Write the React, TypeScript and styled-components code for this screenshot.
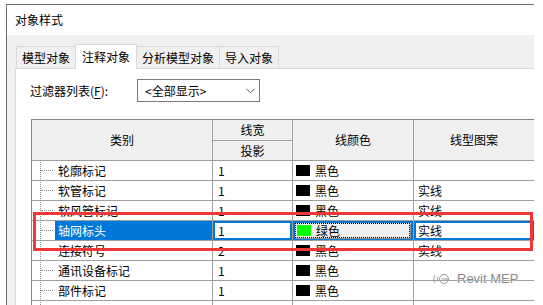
import React from 'react';
import styled, { createGlobalStyle, css } from 'styled-components';

const Global = createGlobalStyle`
  html, body { margin: 0; padding: 0; background: #fff; overflow: hidden; }
  body {
    font-family: "Noto Sans CJK SC", "Noto Sans", sans-serif;
    font-size: 12px;
    color: #000;
  }
  #root { width: 543px; height: 305px; }
`;

const Window = styled.div`
  margin: 4px 0 0 6px;
  width: 528px;
  height: 301px;
  box-sizing: border-box;
  border-top: 1px solid #6d6d6d;
  border-left: 1px solid #6d6d6d;
  overflow: hidden;
  display: flex;
  flex-direction: column;
`;

const TitleBar = styled.div`
  height: 30px;
  flex: none;
  display: flex;
  align-items: center;
  padding-left: 8px;
  background: #fff;
  line-height: 14px;
`;

const Body = styled.div`
  flex: 1;
  background: #f0f0f0;
  padding: 9px 0 0 8px;
  display: flex;
  flex-direction: column;
  min-height: 0;
`;

const TabRow = styled.div`
  height: 24px;
  flex: none;
  display: flex;
  align-items: flex-end;
  padding-left: 1px;
  position: relative;
  z-index: 1;
`;

const Tab = styled.div<{ $active?: boolean }>`
  box-sizing: border-box;
  height: 22px;
  display: flex;
  align-items: center;
  padding: 0 5px;
  border: 1px solid #d9d9d9;
  border-bottom: none;
  background: #f0f0f0;
  line-height: 14px;
  white-space: nowrap;
  & + & { margin-left: -1px; }
  ${p => p.$active && css`
    height: 25px;
    margin-bottom: -1px;
    padding: 0 6px 1px;
    background: #fff;
    position: relative;
    z-index: 2;
  `}
`;

const Panel = styled.div`
  flex: 1;
  background: #fff;
  border-top: 1px solid #d9d9d9;
  border-left: 1px solid #d9d9d9;
  padding: 10px 0 0 14px;
  min-height: 0;
`;

const FilterRow = styled.div`
  display: flex;
  align-items: center;
  height: 23px;
`;

const FilterLabel = styled.div`
  width: 107px;
  line-height: 14px;
  u { text-decoration: underline; text-underline-offset: 2px; }
`;

const Select = styled.div`
  box-sizing: border-box;
  width: 123px;
  height: 23px;
  border: 1px solid #7a7a7a;
  display: flex;
  align-items: center;
  justify-content: space-between;
  padding: 0 4px 0 7px;
  line-height: 14px;
  background: #fff;
`;

const Table = styled.div`
  position: relative;
  margin: 17px 0 0 1px;
  border-top: 1px solid #858585;
  border-left: 1px solid #858585;
  display: grid;
  grid-template-columns: 181px 80px 121px 121px;
  grid-auto-rows: 20px;
  grid-template-rows: 21px 20px;
`;

const HeadCell = styled.div<{ $span?: boolean }>`
  box-sizing: border-box;
  background: #f0f0f0;
  border-right: 1px solid #a0a0a0;
  border-bottom: 1px solid #a0a0a0;
  display: flex;
  align-items: center;
  justify-content: center;
  line-height: 14px;
  ${p => p.$span && css`grid-row: span 2;`}
`;

const Cell = styled.div<{ $selected?: boolean; $pad?: number }>`
  box-sizing: border-box;
  border-right: 1px solid #a0a0a0;
  border-bottom: 1px solid #a0a0a0;
  display: flex;
  align-items: center;
  padding-left: ${p => p.$pad ?? 5}px;
  line-height: 14px;
  white-space: nowrap;
  overflow: hidden;
  ${p => p.$selected && css`box-shadow: inset 0 0 0 2px #0078d7;`}
`;

const CatCell = styled.div<{ $selected?: boolean }>`
  box-sizing: border-box;
  position: relative;
  border-right: 1px solid #a0a0a0;
  border-bottom: 1px solid #a0a0a0;
  display: flex;
  align-items: stretch;
  padding-left: ${p => (p.$selected ? 23 : 26)}px;
  line-height: 14px;
  white-space: nowrap;
  &::before {
    content: '';
    position: absolute;
    left: 8px;
    top: -1px;
    bottom: -1px;
    border-left: 1px dotted #8c8c8c;
  }
  &::after {
    content: '';
    position: absolute;
    left: 9px;
    top: 9px;
    width: 12px;
    border-top: 1px dotted #8c8c8c;
  }
`;

const CatLabel = styled.span<{ $selected?: boolean }>`
  display: flex;
  align-items: center;
  flex: 1;
  ${p => p.$selected && css`
    background: #0078d7;
    color: #fff;
    padding-left: 3px;
  `}
`;

const Swatch = styled.span<{ $color: string }>`
  width: 14px;
  height: 11px;
  background: ${p => p.$color};
  margin-right: 5px;
  flex: none;
`;

const ColorButton = styled.div`
  box-sizing: border-box;
  flex: 1;
  align-self: stretch;
  margin: 2px 2px 2px 0;
  background: #f0f0f0;
  border: 1px dotted #000;
  box-shadow: 1px 1px 0 #8f8f8f;
  display: flex;
  align-items: center;
  padding-left: 1px;
  margin-right: 3px;
`;

const RedFrame = styled.div`
  position: absolute;
  left: 1px;
  top: 92px;
  width: 500px;
  height: 39px;
  box-sizing: border-box;
  border: 3px solid #ee3838;
  pointer-events: none;
`;

const Watermark = styled.div`
  position: absolute;
  left: 400px;
  top: 151px;
  display: flex;
  align-items: center;
  gap: 3px;
  font-family: "Liberation Sans", Arial, sans-serif;
  font-size: 13px;
  color: #8a8a8a;
  text-shadow: 0 0 1px #fff, 0 0 1px #fff;
  pointer-events: none;
`;

type Row = { name: string; width: string; color: 'black' | 'green'; pattern: string; selected?: boolean };

const rows: Row[] = [
  { name: '轮廓标记', width: '1', color: 'black', pattern: '' },
  { name: '软管标记', width: '1', color: 'black', pattern: '实线' },
  { name: '软风管标记', width: '1', color: 'black', pattern: '实线' },
  { name: '轴网标头', width: '1', color: 'green', pattern: '实线', selected: true },
  { name: '连接符号', width: '2', color: 'black', pattern: '实线' },
  { name: '通讯设备标记', width: '1', color: 'black', pattern: '' },
  { name: '部件标记', width: '1', color: 'black', pattern: '' },
];

const Chevron = () => (
  <svg width="9" height="6" viewBox="0 0 9 6">
    <polyline points="0.5,0.8 4.5,4.8 8.5,0.8" fill="none" stroke="#5a5a5a" strokeWidth="1" />
  </svg>
);

const WeChatIcon = () => (
  <svg width="22" height="14" viewBox="0 0 22 14">
    <g fill="none" stroke="#9a9a9a" strokeWidth="1">
      <path d="M3 3 C1.5 5 1.5 9 3 11" />
      <path d="M6 4.5 C5 6 5 8 6 9.5" />
      <circle cx="12" cy="7" r="4.5" />
      <path d="M9.5 7 H17" />
    </g>
  </svg>
);

export default function App() {
  return (
    <>
      <Global />
      <Window>
        <TitleBar>对象样式</TitleBar>
        <Body>
          <TabRow>
            <Tab>模型对象</Tab>
            <Tab $active>注释对象</Tab>
            <Tab>分析模型对象</Tab>
            <Tab>导入对象</Tab>
          </TabRow>
          <Panel>
            <FilterRow>
              <FilterLabel>过滤器列表(<u>F</u>):</FilterLabel>
              <Select>
                <span>&lt;全部显示&gt;</span>
                <Chevron />
              </Select>
            </FilterRow>
            <Table>
              <HeadCell $span>类别</HeadCell>
              <HeadCell>线宽</HeadCell>
              <HeadCell $span>线颜色</HeadCell>
              <HeadCell $span>线型图案</HeadCell>
              <HeadCell>投影</HeadCell>
              {rows.map(r => (
                <React.Fragment key={r.name}>
                  <CatCell $selected={r.selected}>
                    <CatLabel $selected={r.selected}>{r.name}</CatLabel>
                  </CatCell>
                  <Cell $selected={r.selected} $pad={5}>{r.width}</Cell>
                  {r.selected ? (
                    <Cell $selected $pad={2}>
                      <ColorButton>
                        <Swatch $color="#00ff00" />
                        绿色
                      </ColorButton>
                    </Cell>
                  ) : (
                    <Cell $pad={3}>
                      <Swatch $color="#000" />
                      黑色
                    </Cell>
                  )}
                  <Cell $selected={r.selected} $pad={4}>{r.pattern}</Cell>
                </React.Fragment>
              ))}
              <CatCell><CatLabel /></CatCell>
              <Cell />
              <Cell />
              <Cell />
              <RedFrame />
              <Watermark>
                <WeChatIcon />
                <span>Revit MEP</span>
              </Watermark>
            </Table>
          </Panel>
        </Body>
      </Window>
    </>
  );
}
